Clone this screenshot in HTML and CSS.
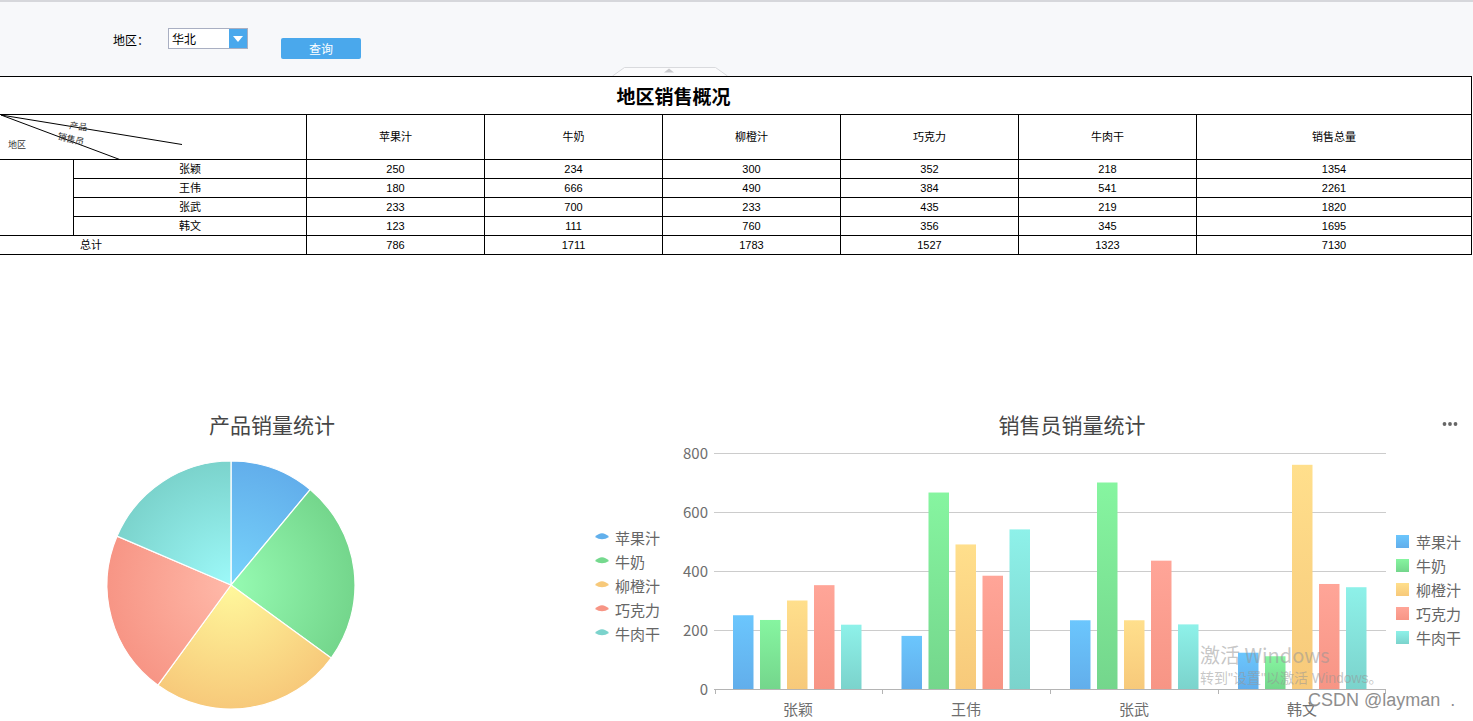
FILE: index.html
```html
<!DOCTYPE html>
<html lang="zh-CN">
<head>
<meta charset="utf-8">
<title>地区销售概况</title>
<link rel="stylesheet" href="styles.css">
</head>
<body>
<div class="toolbar">
  <span class="field-label">地区：</span>
  <div class="select">
    <span class="select-value">华北</span>
    <span class="select-arrow"><svg width="10" height="6" viewBox="0 0 10 6"><path d="M0 0H10L5 6Z" fill="#fff"/></svg></span>
  </div>
  <button class="query-btn">查询</button>
  <svg class="collapse-tab" width="116" height="10" viewBox="0 0 116 10">
    <path d="M0.5 10 L12.5 1.5 H103.5 L115.5 10" fill="#fbfbfc" stroke="#d9dadd"/>
    <path d="M52 6.5 L57 2.5 L62 6.5 Z" fill="#c9cacd"/>
  </svg>
</div>

<table class="report">
  <colgroup>
    <col class="c-region"><col class="c-name">
    <col class="c-num"><col class="c-num"><col class="c-num"><col class="c-num"><col class="c-num">
    <col class="c-total">
  </colgroup>
  <tr class="r-title"><td colspan="8" class="title">地区销售概况</td></tr>
  <tr class="r-head">
    <td colspan="2" class="diag">
      <svg class="diag-svg" width="307" height="45" viewBox="-1 0 307 45">
        <line x1="0" y1="0" x2="181" y2="29.5" stroke="#000" stroke-width="1"/>
        <line x1="0" y1="0" x2="120" y2="45" stroke="#000" stroke-width="1"/>
        <text x="68" y="13.5" transform="rotate(7 68 13.5)">产品</text>
        <text x="56" y="24" transform="rotate(14 56 24)">销售员</text>
        <text x="7" y="33">地区</text>
      </svg>
    </td>
    <td>苹果汁</td><td>牛奶</td><td>柳橙汁</td><td>巧克力</td><td>牛肉干</td><td>销售总量</td>
  </tr>
  <tr class="r-data"><td rowspan="4"></td><td>张颖</td><td>250</td><td>234</td><td>300</td><td>352</td><td>218</td><td>1354</td></tr>
  <tr class="r-data"><td>王伟</td><td>180</td><td>666</td><td>490</td><td>384</td><td>541</td><td>2261</td></tr>
  <tr class="r-data"><td>张武</td><td>233</td><td>700</td><td>233</td><td>435</td><td>219</td><td>1820</td></tr>
  <tr class="r-data"><td>韩文</td><td>123</td><td>111</td><td>760</td><td>356</td><td>345</td><td>1695</td></tr>
  <tr class="r-data"><td colspan="2" class="total-label">总计</td><td>786</td><td>1711</td><td>1783</td><td>1527</td><td>1323</td><td>7130</td></tr>
</table>

<div class="charts">
  <svg class="chart chart-pie" width="671" height="321" viewBox="0 0 671 321">
    <defs>
      <radialGradient id="pg0" gradientUnits="userSpaceOnUse" cx="231" cy="185" r="124"><stop offset="0" stop-color="#78d4fb"/><stop offset="1" stop-color="#62aeeb"/></radialGradient>
      <radialGradient id="pg1" gradientUnits="userSpaceOnUse" cx="231" cy="185" r="124"><stop offset="0" stop-color="#96fbb2"/><stop offset="1" stop-color="#74d68c"/></radialGradient>
      <radialGradient id="pg2" gradientUnits="userSpaceOnUse" cx="231" cy="185" r="124"><stop offset="0" stop-color="#fff89c"/><stop offset="1" stop-color="#f7c97a"/></radialGradient>
      <radialGradient id="pg3" gradientUnits="userSpaceOnUse" cx="231" cy="185" r="124"><stop offset="0" stop-color="#ffb9a9"/><stop offset="1" stop-color="#f79585"/></radialGradient>
      <radialGradient id="pg4" gradientUnits="userSpaceOnUse" cx="231" cy="185" r="124"><stop offset="0" stop-color="#9df9f9"/><stop offset="1" stop-color="#7bd3cc"/></radialGradient>
    </defs>
    <text class="chart-title" x="272" y="33" text-anchor="middle">产品销量统计</text>
    <g stroke="#fff" stroke-width="1.2">
      <path d="M231 185 L231 61 A124 124 0 0 1 310.17 89.57 Z" fill="url(#pg0)"/>
      <path d="M231 185 L310.17 89.57 A124 124 0 0 1 331.22 258.02 Z" fill="url(#pg1)"/>
      <path d="M231 185 L331.22 258.02 A124 124 0 0 1 157.94 285.19 Z" fill="url(#pg2)"/>
      <path d="M231 185 L157.94 285.19 A124 124 0 0 1 117.03 136.14 Z" fill="url(#pg3)"/>
      <path d="M231 185 L117.03 136.14 A124 124 0 0 1 231 61 Z" fill="url(#pg4)"/>
    </g>
    <g class="legend">
      <path d="M595 137 Q602 129.5 609 137 Q602 141.5 595 137 Z" fill="#62b0ec"/>
      <text x="615" y="137">苹果汁</text>
      <path d="M595 161 Q602 153.5 609 161 Q602 165.5 595 161 Z" fill="#75d98e"/>
      <text x="615" y="161">牛奶</text>
      <path d="M595 185 Q602 177.5 609 185 Q602 189.5 595 185 Z" fill="#f7c97a"/>
      <text x="615" y="185">柳橙汁</text>
      <path d="M595 209 Q602 201.5 609 209 Q602 213.5 595 209 Z" fill="#f79585"/>
      <text x="615" y="209">巧克力</text>
      <path d="M595 233 Q602 225.5 609 233 Q602 237.5 595 233 Z" fill="#7bd3cc"/>
      <text x="615" y="233">牛肉干</text>
    </g>
  </svg>

  <svg class="chart chart-bar" width="802" height="321" viewBox="0 0 802 321">
    <defs>
      <linearGradient id="bg0" x1="0" y1="0" x2="0" y2="1"><stop offset="0" stop-color="#6bc6fd"/><stop offset="1" stop-color="#62aeeb"/></linearGradient>
      <linearGradient id="bg1" x1="0" y1="0" x2="0" y2="1"><stop offset="0" stop-color="#86f5a0"/><stop offset="1" stop-color="#74d68c"/></linearGradient>
      <linearGradient id="bg2" x1="0" y1="0" x2="0" y2="1"><stop offset="0" stop-color="#ffdf8c"/><stop offset="1" stop-color="#f7c97a"/></linearGradient>
      <linearGradient id="bg3" x1="0" y1="0" x2="0" y2="1"><stop offset="0" stop-color="#ffa598"/><stop offset="1" stop-color="#f79585"/></linearGradient>
      <linearGradient id="bg4" x1="0" y1="0" x2="0" y2="1"><stop offset="0" stop-color="#8ef1e9"/><stop offset="1" stop-color="#7bd3cc"/></linearGradient>
    </defs>
    <text class="chart-title" x="401" y="33" text-anchor="middle">销售员销量统计</text>
    <g fill="#666"><circle cx="773.5" cy="24" r="1.9"/><circle cx="779" cy="24" r="1.9"/><circle cx="784.5" cy="24" r="1.9"/></g>
    <g stroke="#cccccc" stroke-width="1">
      <line x1="43" y1="53.5" x2="715" y2="53.5"/>
      <line x1="43" y1="112.5" x2="715" y2="112.5"/>
      <line x1="43" y1="171.5" x2="715" y2="171.5"/>
      <line x1="43" y1="230.5" x2="715" y2="230.5"/>
    </g>
    <g class="axis-label" text-anchor="end">
      <text x="37" y="52.5">800</text>
      <text x="37" y="111.5">600</text>
      <text x="37" y="170.5">400</text>
      <text x="37" y="229.5">200</text>
      <text x="37" y="288.5">0</text>
    </g>
    <g>
      <rect x="62" y="215.25" width="20.5" height="73.75" fill="url(#bg0)"/>
      <rect x="89" y="219.97" width="20.5" height="69.03" fill="url(#bg1)"/>
      <rect x="116" y="200.5" width="20.5" height="88.5" fill="url(#bg2)"/>
      <rect x="143" y="185.16" width="20.5" height="103.84" fill="url(#bg3)"/>
      <rect x="170" y="224.69" width="20.5" height="64.31" fill="url(#bg4)"/>

      <rect x="230.5" y="235.9" width="20.5" height="53.1" fill="url(#bg0)"/>
      <rect x="257.5" y="92.53" width="20.5" height="196.47" fill="url(#bg1)"/>
      <rect x="284.5" y="144.45" width="20.5" height="144.55" fill="url(#bg2)"/>
      <rect x="311.5" y="175.72" width="20.5" height="113.28" fill="url(#bg3)"/>
      <rect x="338.5" y="129.4" width="20.5" height="159.6" fill="url(#bg4)"/>

      <rect x="399" y="220.26" width="20.5" height="68.74" fill="url(#bg0)"/>
      <rect x="426" y="82.5" width="20.5" height="206.5" fill="url(#bg1)"/>
      <rect x="453" y="220.26" width="20.5" height="68.74" fill="url(#bg2)"/>
      <rect x="480" y="160.67" width="20.5" height="128.33" fill="url(#bg3)"/>
      <rect x="507" y="224.39" width="20.5" height="64.61" fill="url(#bg4)"/>

      <rect x="567" y="252.71" width="20.5" height="36.29" fill="url(#bg0)"/>
      <rect x="594" y="256.25" width="20.5" height="32.75" fill="url(#bg1)"/>
      <rect x="621" y="64.8" width="20.5" height="224.2" fill="url(#bg2)"/>
      <rect x="648" y="183.98" width="20.5" height="105.02" fill="url(#bg3)"/>
      <rect x="675" y="187.22" width="20.5" height="101.78" fill="url(#bg4)"/>
    </g>
    <g stroke="#b4b4b4" stroke-width="1">
      <line x1="43" y1="289.5" x2="715" y2="289.5"/>
      <line x1="44.5" y1="289" x2="44.5" y2="294"/>
      <line x1="211.5" y1="289" x2="211.5" y2="294"/>
      <line x1="379.5" y1="289" x2="379.5" y2="294"/>
      <line x1="547.5" y1="289" x2="547.5" y2="294"/>
      <line x1="714.5" y1="289" x2="714.5" y2="294"/>
    </g>
    <g class="axis-label x-label" text-anchor="middle">
      <text x="127" y="308">张颖</text>
      <text x="295" y="308">王伟</text>
      <text x="463" y="308">张武</text>
      <text x="631" y="308">韩文</text>
    </g>
    <g class="legend">
      <rect x="725" y="135" width="13" height="13" fill="url(#bg0)"/>
      <text x="745" y="141">苹果汁</text>
      <rect x="725" y="159" width="13" height="13" fill="url(#bg1)"/>
      <text x="745" y="165">牛奶</text>
      <rect x="725" y="183" width="13" height="13" fill="url(#bg2)"/>
      <text x="745" y="189">柳橙汁</text>
      <rect x="725" y="207" width="13" height="13" fill="url(#bg3)"/>
      <text x="745" y="213">巧克力</text>
      <rect x="725" y="231" width="13" height="13" fill="url(#bg4)"/>
      <text x="745" y="237">牛肉干</text>
    </g>
  </svg>
</div>

<div class="watermark">
  <div class="wm-big">激活 Windows</div>
  <div class="wm-small">转到"设置"以激活 Windows。</div>
</div>
<div class="csdn-mark">CSDN @layman &nbsp;.</div>
</body>
</html>
```

FILE: styles.css
```css
html, body {
  margin: 0;
  padding: 0;
  overflow: hidden;
  background: #fff;
}
body {
  font-family: "Liberation Sans", "Noto Sans CJK SC", sans-serif;
  color: #000;
  position: relative;
  width: 1473px;
  height: 721px;
}

/* ---------- toolbar ---------- */
.toolbar {
  position: relative;
  box-sizing: border-box;
  height: 76px;
  border-top: 2px solid #d6d7db;
  background: #f7f8fa;
  display: flex;
  align-items: flex-start;
  padding-left: 113px;
  font-size: 12px;
}
.field-label {
  margin-top: 30px;
  line-height: 16px;
  font-family: "Noto Sans CJK SC", sans-serif;
  font-size: 12px;
}
.select {
  margin-top: 26px;
  margin-left: 19px;
  width: 80px;
  height: 21px;
  box-sizing: border-box;
  border: 1px solid #a9afc2;
  background: #fff;
  display: flex;
}
.select-value {
  flex: 1;
  padding-left: 3px;
  line-height: 19px;
  font-family: "Noto Sans CJK SC", sans-serif;
  font-size: 12px;
}
.select-arrow {
  width: 18px;
  background: #4aa8ec;
  display: flex;
  align-items: center;
  justify-content: center;
}
.query-btn {
  margin-top: 36px;
  margin-left: 33px;
  width: 80px;
  height: 21px;
  border: none;
  border-radius: 2px;
  background: #4aa8ec;
  color: #fff;
  font-family: "Noto Sans CJK SC", sans-serif;
  font-size: 12px;
  padding: 0;
  line-height: 21px;
}
.collapse-tab {
  position: absolute;
  left: 612px;
  bottom: 0;
}

/* ---------- report table ---------- */
.report {
  border-collapse: collapse;
  table-layout: fixed;
  width: 1473px;
  margin-left: -1px;
  font-size: 11px;
}
.c-region { width: 74px; }
.c-name { width: 233px; }
.c-num { width: 178px; }
.c-total { width: 275px; }
.report td {
  border: 1px solid #000;
  padding: 0;
  text-align: center;
  vertical-align: middle;
  line-height: 14px;
}
.report .r-title td { height: 37px; }
.report .r-head td { height: 44px; }
.report .r-data td { height: 18px; }
.report td.title {
  font-family: "Noto Sans CJK SC", serif;
  font-weight: bold;
  font-size: 19px;
  padding-right: 124px;
}
.report td.diag {
  position: relative;
  padding: 0;
}
.diag-svg {
  position: absolute;
  left: 0;
  top: 0;
  font-family: "Noto Sans CJK SC", serif;
  font-size: 9px;
  fill: #333;
}
.report td.total-label {
  text-align: left;
  padding-left: 80px;
}

/* ---------- charts ---------- */
.charts {
  display: flex;
  margin-top: 145px;
  height: 321px;
}
.chart {
  display: block;
  flex: none;
  font-family: "Noto Sans CJK SC", "Liberation Sans", sans-serif;
}
.chart-title {
  font-size: 21px;
  fill: #464646;
}
.legend text {
  font-size: 15px;
  fill: #666;
  dominant-baseline: central;
}
.axis-label text {
  font-size: 15px;
  fill: #6e6e6e;
  dominant-baseline: central;
}
.x-label text {
  dominant-baseline: central;
}

/* ---------- overlays ---------- */
.watermark {
  position: absolute;
  left: 1200px;
  top: 642px;
  color: rgba(150, 150, 150, 0.55);
}
.wm-big {
  font-family: "Noto Sans CJK SC", sans-serif;
  font-size: 20px;
  line-height: 26px;
}
.wm-small {
  font-family: "Liberation Sans", "Noto Sans CJK SC", sans-serif;
  font-size: 14px;
  line-height: 20px;
}
.csdn-mark {
  position: absolute;
  left: 1308px;
  top: 690px;
  font-family: "Liberation Sans", "Noto Sans CJK SC", sans-serif;
  font-size: 18px;
  color: #8e8e8e;
  white-space: nowrap;
}
```
